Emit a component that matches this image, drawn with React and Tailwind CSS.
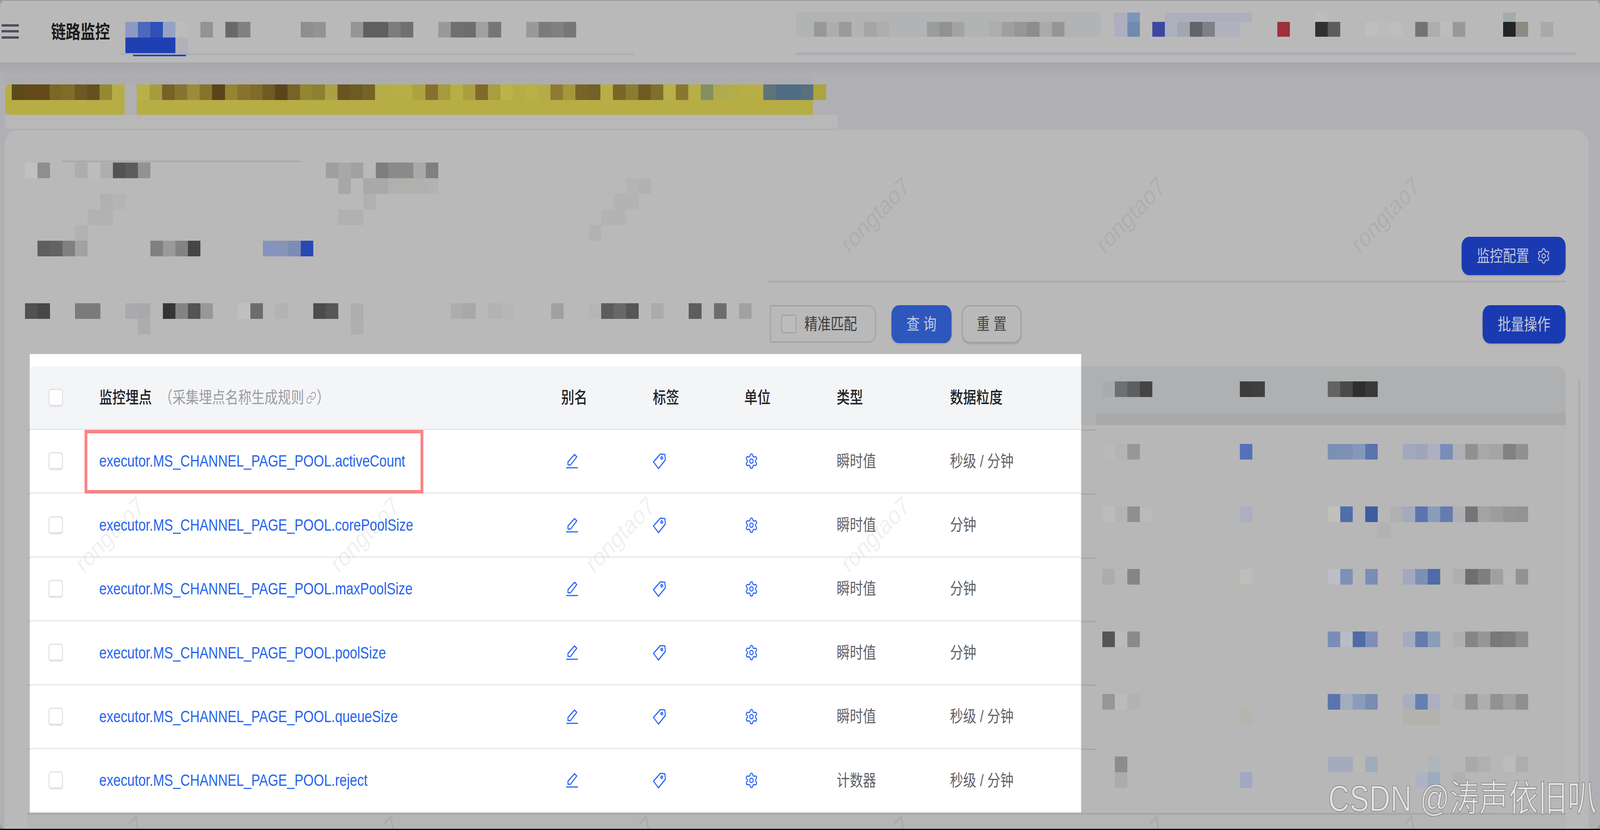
import React from "react";
import { Settings, Link } from "lucide-react";

// redaction mosaic: rows of 40px cells lying over the page
const seg = (y, x0, colors, h = 40) =>
  colors.split(" ").map((c, i) => (c === "-" ? null : [x0 + i * 40, y, 40, h, "#" + c])).filter(Boolean);

const cells = [
  // faint bands under the blocks
  [2542, 32, 973, 62, "#b1b3b4"],
  [3720, 32, 280, 24, "#aeafbd"],
  [3556, 32, 44, 24, "#adafc0"],
  [3600, 32, 40, 24, "#7f94ba"],
  [4200, 32, 40, 24, "#bdbdbd"],
  [4800, 32, 40, 24, "#a3aca8"],
  [198, 411, 761, 4, "#aaaaaa"],
  // table row stubs beside the white panel
  ...[1099, 1263, 1427, 1589, 1752, 1916].flatMap((y) => [
    [87, y, 8, 3, "#a5a5a5"],
    [3453, y, 48, 3, "#a5a5a5"],
  ]),

  // header tabs
  ...seg(56, 400, "8a9ac4 4c68bb 2f50b7 95a2c4 bcbcbc - 939393 - 696969 808080 - - - - 8e8e8e 939393 - - 959595 5f5f5f 5f5f5f 7c7c7c 707070 - - 999999 707070 6d6d6d a0a0a0 767676 - - 999999 7b7b7b 808080 777777"),
  ...seg(96, 400, "1f40b3 1f40b3 1f40b3 1f40b3 b0b2ba"),

  // header right
  ...seg(56, 2600, "979997 adadad 9a9a9a - a5a5a5 adadad - - - 9b9d9b 909290 a3a3a3 - - adadad 9f9f9f 959795 8c8c8c aaaaaa 959595", 38),
  ...seg(56, 3560, "adafc0 6f8ab0 - 3c47a4 adb0be a2a6ae 616569 7f7f87 b0b2bd b0b2bd", 38),
  ...seg(56, 4080, "9f2f3b - - 303030 5c5c5c", 38),
  ...seg(56, 4360, "bebebe bbbbbb bdbdbd - 737373 adadad bdbdbd 999999", 38),
  ...seg(56, 4800, "222427 8d8a83 - a9a9a9", 38),

  // yellow notice
  ...seg(216, 38, "5c4a1a 63491b 644a1a 7d6726 816d28 6e5925 665020 958835 b6ad48"),
  ...seg(216, 438, "b8b048 a69c3f 776127 867430 9c8b37 88722c 5b441a 968433 88722c 816b2a 705a24 5a441a 776228 948532 8c8032 aba042 6a5422 6c5b24 776228 b5ad47 b7ae48 b7ae48 ada23f 87702e a59b3c b7ae48 aa9f40 80692a a89d3f b9b34a b6ad48 b9b048 b4ac49 8e7b32 a4973a 776428 73602a b7ae48 7b6628 8a7c30 6f5b24 806e2c b8b048 8a772e b7ae48 84905f b0aa50 afae4d b7ae48 b7ae48 5e7478 4f6c82 4f6c82 5a7080 aca43f"),

  // filter form
  ...seg(416, 80, "c0c0c0 8e8e8e - - adadad bcbcbc aeaeae 535353 5c5c5c 929292"),
  ...seg(416, 1040, "9f9f9f a8a8a8 a1a1a1 - 7e7e7e 8a8a8a 8a8a8a a9a9a9 808080"),
  ...seg(456, 1080, "a7a7a7 - a9a9a9 a9a9a9 b0b1ae b0b1ae b0b1ae b2b2b2"),
  ...seg(456, 2000, "b3b5b3 b1b1b1"),
  ...seg(496, 320, "b0b2b0 b4b5b3"),
  ...seg(496, 1160, "b0b0b0"),
  ...seg(496, 1960, "b3b3b3 b3b3b3"),
  ...seg(536, 280, "b2b2b2 b2b2b2"),
  ...seg(536, 1080, "b0b1b0 b0b1b0"),
  ...seg(536, 1920, "b3b3b3 b3b3b3"),
  ...seg(576, 240, "b2b2b2"),
  ...seg(576, 1880, "b2b2b2"),
  ...seg(616, 120, "5e5e5e 636363 808080 a2a2a2"),
  ...seg(616, 480, "808080 9a9a9a 838383 464646"),
  ...seg(616, 840, "8393bd 8594b8 7b8cb7 2849b5"),
  ...seg(776, 80, "515151 484848 - - 7b7b7b 7b7b7b - - aaa9ae a9a9a9 - 353535 838383 535353 989898 - - c0c0c0 6c6c6c - b3b3b3 - - 4c4c4c 565656 - aeaeae"),
  ...seg(776, 1440, "adadad a8a8a8 - b2b2b2 b6b6b6"),
  ...seg(776, 1760, "a0a0a0 - - b5b5b5 5c5c5c 686868 565656 - ababab - - 5d5d5d - 6d6d6d - a1a1a1"),
  ...seg(816, 440, "adadad"),
  ...seg(816, 1120, "afb0ae"),

  // right part of the table
  ...seg(976, 3520, "a9abaf 6e6f71 5d5e60 444444"),
  ...seg(976, 3960, "3c3c3d 3f3f41"),
  ...seg(976, 4240, "636363 494949 2d2e2d 393939"),
  ...seg(1136, 3520, "b9b9b9 b3b5b3 979797"),
  ...seg(1136, 3960, "5571bd"),
  ...seg(1136, 4240, "7b90b5 7c90b3 8698b7 5a74ac - - a3a9bd a0a6b9 aeb0bf 788db7 b0afb5 919191 a8a8a8 a5a5a5 818181 919191"),
  ...seg(1296, 3520, "bcbcbc b4b4b4 8f8f8f bababa"),
  ...seg(1296, 3960, "abafc0"),
  ...seg(1296, 4240, "c2c0b9 4f6eaa - 3f5ca1 - b0b0b0 a3aabf 5b74ad 8a9cb9 647cb0 b0afb5 757575 a3a3a3 9d9d9d 959595 939393"),
  ...seg(1336, 4400, "b2b2b2"),
  ...seg(1456, 3520, "acacac - 858585"),
  ...seg(1456, 3960, "bdbeb7"),
  ...seg(1456, 4240, "bdbec5 7e90b6 - 7a8db4 - - a0a9bd 7d8fb4 4f6ca9 - b0aeb3 6f6f6f 7f7f7f a0a0a0 b8b8b8 929292"),
  ...seg(1616, 3520, "555555 bbbbbb 8a8a8a"),
  ...seg(1616, 4240, "7b8db6 b8bcc6 4f6ca6 7c8fb6 - - a3abc0 637cad 8c9dbc - b0afb4 858585 969696 787878 7d7d7d 8d8d8d"),
  ...seg(1776, 3520, "969696 bbbbbb b2b2b2"),
  ...seg(1776, 4240, "5a75ac a3abc0 8a9cb9 7a8db4 - - a7aec0 6480b0 acafc1 - b2b1b6 929292 aeaeae 929292 a1a1a1 8f8f8f"),
  ...seg(1816, 3960, "b5b5ad"),
  ...seg(1816, 4480, "b3b3ae b3b3ae b3b3ae"),
  ...seg(1936, 3560, "8c8c8c"),
  ...seg(1936, 4240, "a3abbd a3abbd b9b8b1 a0abbc - - - - aeb5bb - - a9a9a9 b0b0b0 - bcbcbc adadad"),
  ...seg(1976, 3560, "ababab"),
  ...seg(1976, 3960, "9fa9c2"),
  ...seg(1976, 4520, "acb3c2 9cacbe - b1b1b1"),
];

const rows = [
  { name: "executor.MS_CHANNEL_PAGE_POOL.activeCount", type: "瞬时值", grain: "秒级 / 分钟" },
  { name: "executor.MS_CHANNEL_PAGE_POOL.corePoolSize", type: "瞬时值", grain: "分钟" },
  { name: "executor.MS_CHANNEL_PAGE_POOL.maxPoolSize", type: "瞬时值", grain: "分钟" },
  { name: "executor.MS_CHANNEL_PAGE_POOL.poolSize", type: "瞬时值", grain: "分钟" },
  { name: "executor.MS_CHANNEL_PAGE_POOL.queueSize", type: "瞬时值", grain: "秒级 / 分钟" },
  { name: "executor.MS_CHANNEL_PAGE_POOL.reject", type: "计数器", grain: "秒级 / 分钟" },
];

const marks = [
  [2796, 550], [3611, 550], [4426, 550],
  [351, 1368], [1166, 1368], [1981, 1368], [2796, 1368],
  [351, 2186], [1166, 2186], [1981, 2186], [2796, 2186], [3611, 2186], [4426, 2186],
];

const gridCols = "grid grid-cols-[222px_1475px_293px_292px_295px_362px_1fr] items-center";

function Checkbox() {
  return <span className="ml-[60px] block h-[46px] w-[46px] rounded-[8px] border-[3px] border-b-[5px] border-[#dfe1e5] bg-white" />;
}

function EditIcon() {
  return (
    <svg width="38" height="38" viewBox="0 0 38 38" fill="none" stroke="#2b66f6" strokeWidth="3.2" strokeLinejoin="round" className="ml-[16px]">
      <path d="M6 29V21L27 2L34 8L14 29Z" />
      <path d="M0 36H38" />
    </svg>
  );
}

function TagIcon() {
  return (
    <svg width="42" height="42" viewBox="0 0 42 42" fill="none" stroke="#2b66f6" strokeWidth="3.2" strokeLinejoin="round">
      <path d="M24 3L38.5 4L40 18L18 40L2 23Z" />
      <circle cx="28.5" cy="13" r="3" />
    </svg>
  );
}

function Row({ row, marked }) {
  return (
    <div className={`${gridCols} relative h-[163.4px] border-b-[3px] border-[#e6e7e9] text-[42px] text-[#5f6268]`}>
      <Checkbox />
      <a className="text-[42.4px] text-[#2563eb]">{row.name}</a>
      <EditIcon />
      <TagIcon />
      <Settings size={44} color="#2b66f6" strokeWidth={1.7} className="ml-[1px]" />
      <span>{row.type}</span>
      <span>{row.grain}</span>
      {marked && <div className="absolute left-[175px] top-0 h-[163px] w-[1082px] border-[9px] border-[#f98486]" />}
    </div>
  );
}

export default function App() {
  // the page is laid out in the reference's 5110px coordinates; if the window
  // comes up narrower (it reports 4096), fit it horizontally instead of clipping
  const fitX = Math.min(1, window.innerWidth / 5110);

  return (
    <div className="h-[2124px] w-screen overflow-hidden">
      <div
        className="relative h-[2124px] w-[5110px] origin-top-left overflow-hidden border-b-[3px] border-black bg-[#9a9a9a] font-['Liberation_Sans','Noto_Sans_CJK_SC',sans-serif]"
        style={{ transform: `scaleX(${fitX})` }}
      >
        <div className="flex h-full flex-col overflow-hidden rounded-[18px] bg-[#b0afb3]">
          {/* top bar */}
          <header className="flex h-[160px] shrink-0 items-start border-t-2 border-[#999999] bg-[#b9b9b9]">
            <svg width="55" height="40" viewBox="0 0 55 40" className="ml-[5px] mt-[60px]" fill="#4b4f5e">
              <rect y="0" width="55" height="6" />
              <rect y="15" width="55" height="6" />
              <rect y="31" width="55" height="6" />
            </svg>
            <h1 className="ml-[103px] mt-[48px] text-[47px] font-bold leading-[64px] text-[#1c1c1c]">链路监控</h1>
            <div className="relative ml-[33px] h-[139px] w-[1642px] border-b-[5px] border-[#aeaeb8]">
              <div className="absolute -bottom-[8px] left-[41px] h-[4px] w-[169px] bg-[#2040b8]" />
            </div>
            <div className="ml-[515px] h-[139px] w-[2494px] border-b-[7px] border-[#adacb8]" />
          </header>
          <div className="h-[35px] shrink-0 bg-linear-to-b from-[#a6a7aa] to-[#b0afb3]" />

          {/* notice */}
          <div className="ml-[16px] flex shrink-0 flex-col">
            <div className="h-[21px] w-[2580px] bg-[#adadb1]" />
            <div className="flex h-[78px]">
              <div className="w-[382px] rounded-l-[16px] bg-[#b7ad45]" />
              <div className="ml-[39px] w-[2159px] bg-[#b7ad45]" />
            </div>
            <div className="h-[35px] w-[2660px] bg-[#b8b8b8]" />
          </div>

          {/* card */}
          <main className="ml-[15px] mt-[4px] flex w-[5059px] flex-1 flex-col rounded-t-[40px] bg-[#b9b9b9]">
            <div className="flex h-[573px] shrink-0">
              <div className="w-[2439px]" />
              <div className="mr-[74px] flex flex-1 flex-col">
                <div className="flex h-[389px] items-end justify-end border-b-[3px] border-[#a6a6a6] pb-[15px]">
                  <button className="flex h-[98px] w-[332px] items-center justify-center gap-[24px] rounded-[24px] bg-[#1a3ab2] text-[42px] text-[#c4c8d4] shadow-md">
                    监控配置
                    <Settings size={44} strokeWidth={1.5} />
                  </button>
                </div>
                <div className="flex flex-1 items-start pt-[59px]">
                  <label className="ml-[5px] flex h-[96px] w-[339px] items-center rounded-r-[24px] border-[3px] border-[#a0a0a0] pl-[33px] text-[42px] text-[#3d3d3d]">
                    <span className="h-[48px] w-[48px] rounded-[6px] border-[3px] border-[#a2a2a2] bg-[#bcbcbc]" />
                    <span className="ml-[26px]">精准匹配</span>
                  </label>
                  <button className="ml-[49px] h-[97px] w-[192px] rounded-[24px] bg-[#2e57be] text-[42px] text-[#c4cbe0] shadow-md">查 询</button>
                  <button className="ml-[33px] h-[97px] w-[190px] rounded-[24px] border-[3px] border-[#9f9f9f] text-[42px] text-[#444444] shadow-md">重 置</button>
                  <button className="ml-auto h-[98px] w-[265px] rounded-[24px] bg-[#1a3ab2] text-[42px] text-[#c4c8d4] shadow-md">批量操作</button>
                </div>
              </div>
            </div>

            <div className="ml-[80px] flex h-[1174px] shrink-0 items-start">
              {/* highlighted white panel */}
              <section className="h-[1176px] w-[3358px] shrink-0 bg-white pt-[32px]">
                <div className={`${gridCols} h-[162px] rounded-tl-[14px] border-b-[3px] border-[#e6e7e9] bg-[#f4f5f7] text-[42px] font-medium text-[#1f2329]`}>
                  <Checkbox />
                  <div className="flex items-center">
                    监控埋点
                    <span className="ml-[24px] flex items-center font-normal text-[#9a9da3]">
                      （采集埋点名称生成规则
                      <Link size={34} strokeWidth={1.6} className="ml-[6px]" />
                      <span className="-mr-[21px]">）</span>
                    </span>
                  </div>
                  <span>别名</span>
                  <span>标签</span>
                  <span>单位</span>
                  <span>类型</span>
                  <span>数据粒度</span>
                </div>
                {rows.map((row, i) => (
                  <Row key={row.name} row={row} marked={i === 0} />
                ))}
              </section>

              {/* dimmed rest of the table */}
              <section className="flex h-[1174px] w-[1547px] shrink-0 flex-col pt-[31px]">
                <div className="h-[151px] shrink-0 rounded-tr-[24px] bg-[#afb0b2] pl-[48px] pt-[119px]">
                  <div className="h-[32px] bg-[#a9a9ab]" />
                </div>
                <div className="flex-1 bg-[#b7b7b7]" />
              </section>
              <div className="ml-[41px] mt-[63px] h-[1111px] w-[6px] bg-[#abacb0]" />
            </div>
            <div className="ml-[72px] mr-[74px] flex-1 border-t-[5px] border-[#a8a8a8] bg-[#b5b5b5]" />
          </main>
        </div>

        {/* mosaic over the original content */}
        <svg width="5110" height="2124" className="pointer-events-none absolute left-0 top-0" shapeRendering="crispEdges">
          {cells.map(([x, y, w, h, fill], i) => (
            <rect key={i} x={x} y={y} width={w} height={h} fill={fill} />
          ))}
        </svg>

        {/* account watermark */}
        {marks.map(([x, y]) => (
          <span
            key={`${x}-${y}`}
            className="pointer-events-none absolute -translate-x-1/2 -translate-y-1/2 -rotate-[40deg] text-[66px] text-black/[0.06]"
            style={{ left: x, top: y }}
          >
            rongtao7
          </span>
        ))}

        <span className="absolute bottom-[30px] right-[10px] text-[94px] leading-none text-[#e4e4e4] [-webkit-text-stroke:2px_#8f8f8f]">
          CSDN @涛声依旧叭
        </span>
      </div>
    </div>
  );
}
